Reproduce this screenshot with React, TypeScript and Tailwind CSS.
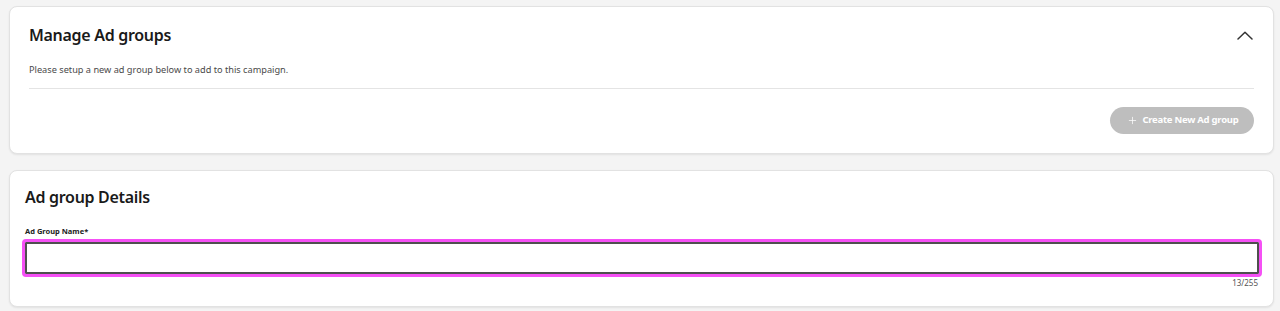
import { Plus } from 'lucide-react';

export default function App() {
  return (
    <div
      className="min-h-[311px] w-full bg-[#f4f4f4] pl-[9px] pr-[6px] pt-[6px]"
      style={{ fontFamily: '"Noto Sans", "Open Sans", sans-serif' }}
    >
      {/* Manage Ad groups */}
      <div className="rounded-lg border border-[#e2e2e2] bg-white px-[19px] pb-[19px] pt-[17px] shadow-[0_1px_2px_rgba(0,0,0,0.08)]">
        <div className="flex h-[22px] items-center justify-between">
          <h2 className="text-[16px] font-semibold leading-[22px] tracking-[-0.3px] text-[#1a1a1a]">Manage Ad groups</h2>
          <svg width="16" height="9" viewBox="0 0 16 9" fill="none" className="mr-[1px] mt-[1px]">
            <path d="M1 8 L8 1.2 L15 8" stroke="#333" strokeWidth="1.5" strokeLinecap="round" strokeLinejoin="round" />
          </svg>
        </div>
        <p className="mt-[17px] text-[9.2px] leading-[14px] text-[#4a4a4a]">
          Please setup a new ad group below to add to this campaign.
        </p>
        <div className="mt-[11px] h-px bg-[#e4e4e4]" />
        <div className="mt-[18px] flex justify-end">
          <button
            disabled
            className="flex h-[27px] w-[144px] items-center justify-center gap-[4px] rounded-full bg-[#bebebe] pl-[2px] text-[9.5px] font-bold tracking-[-0.25px] text-white"
          >
            <Plus className="h-[11px] w-[11px]" strokeWidth={1.6} />
            Create New Ad group
          </button>
        </div>
      </div>

      {/* Ad group Details */}
      <div className="mt-[16px] rounded-lg border border-[#e2e2e2] bg-white pb-[18px] pl-[15px] pr-[14px] pt-[15px] shadow-[0_1px_2px_rgba(0,0,0,0.08)]">
        <h2 className="text-[16px] font-semibold leading-[22px] tracking-[-0.3px] text-[#1a1a1a]">Ad group Details</h2>
        <label className="mt-[18px] block text-[7.5px] font-bold leading-[10px] text-[#222]">Ad Group Name*</label>
        <input
          type="text"
          className="mt-[6px] block h-[32px] w-full rounded-[1px] border-2 border-[#4f4f4f] bg-white outline outline-[3px] outline-[#f550f5]"
        />
        <div className="mt-[4px] flex justify-end pr-[1px] text-[8px] leading-[10px] text-[#555]">13/255</div>
      </div>
    </div>
  );
}
